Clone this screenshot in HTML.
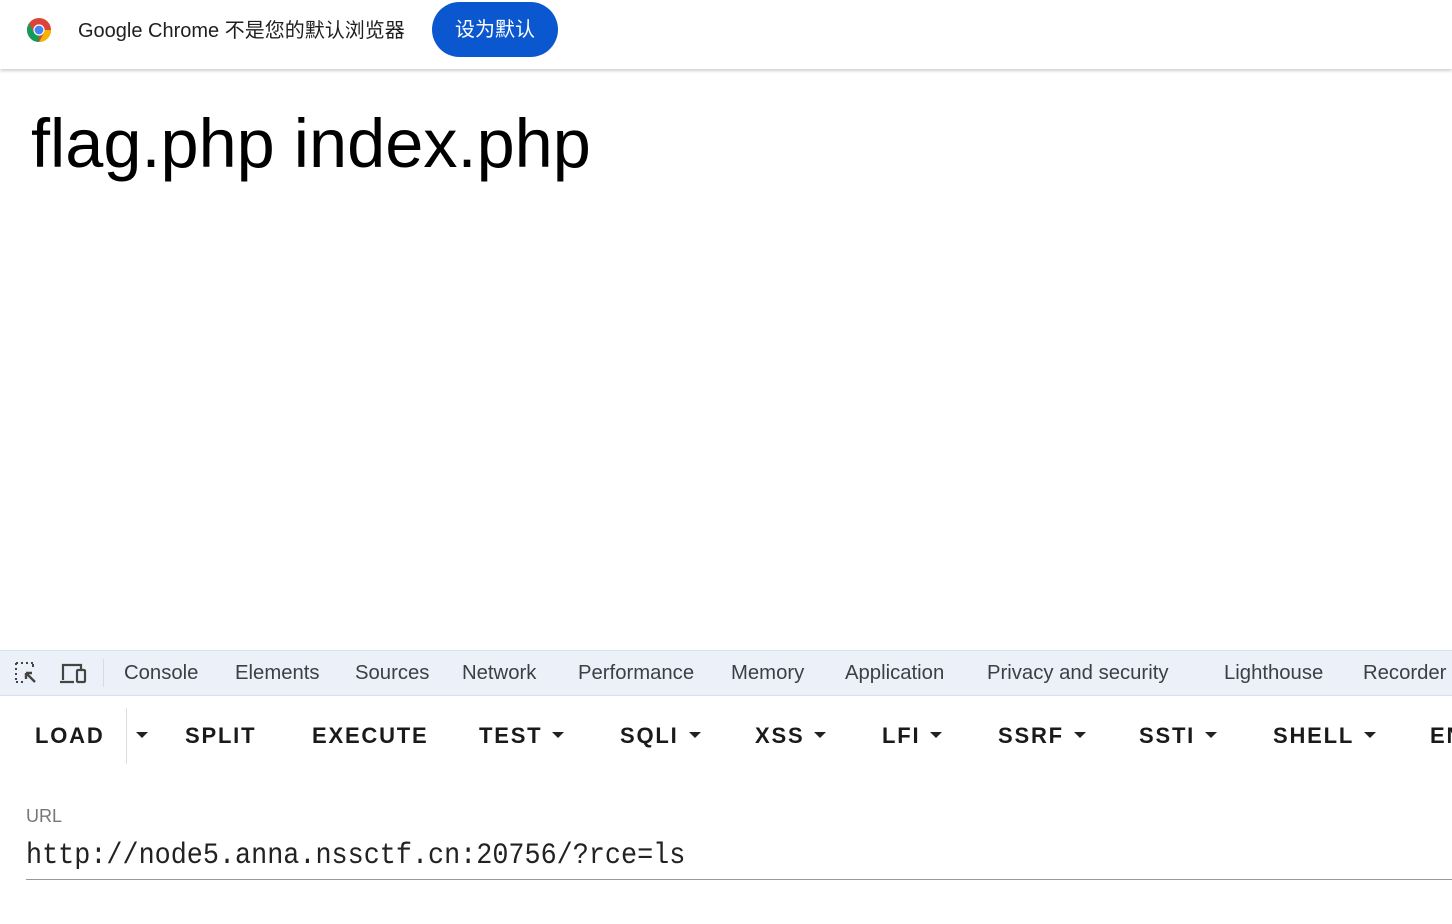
<!DOCTYPE html>
<html><head><meta charset="utf-8"><style>
*{margin:0;padding:0;box-sizing:border-box}
body{width:1452px;height:924px;overflow:hidden;background:#fff;font-family:"Liberation Sans","Noto Sans CJK SC",sans-serif;position:relative}
.a{position:absolute;white-space:nowrap}
.bar{position:absolute;left:0;top:0;width:1452px;height:69px;background:#fff;box-shadow:0 2px 3px rgba(0,0,0,.18)}
.tabs{position:absolute;left:0;top:650px;width:1452px;height:46px;background:#ecf1f9;border-top:1px solid #d3e0f5;border-bottom:1px solid #d3e0f5}
.t{position:absolute;top:11px;font-size:20.3px;color:#3c3f44}
.b{position:absolute;top:723px;font-size:22px;font-weight:bold;letter-spacing:1.8px;color:#1a1a1a}
.c{display:inline-block;width:0;height:0;border-left:6px solid transparent;border-right:6px solid transparent;border-top:6px solid #222;vertical-align:middle;margin-left:10px;position:relative;top:-2px}
</style></head><body>
<div class="bar">
<svg class="a" style="left:26px;top:17px" width="26" height="26" viewBox="0 0 26 26">
<circle cx="13" cy="13" r="12" fill="#db4437"/>
<path d="M13 13 L2.6 19 A12 12 0 0 0 13 25 Z" fill="#0f9d58"/>
<path d="M13 13 L2.6 19 A12 12 0 0 1 1 13 A12 12 0 0 1 3 6.5 L8 15.5Z" fill="#0f9d58"/>
<path d="M13 13 L25 13 A12 12 0 0 1 13 25 L18.5 15Z" fill="#f4b400"/>
<circle cx="13" cy="13" r="5.6" fill="#fff"/><circle cx="13" cy="13" r="4.4" fill="#4285f4"/></svg>
<div class="a" style="left:78px;top:14px;font-size:20px;color:#1f1f1f">Google Chrome 不是您的默认浏览器</div>
<div class="a" style="left:432px;top:2px;width:126px;height:55px;border-radius:28px;background:#0b57d0;color:#fff;font-size:20px;text-align:center;line-height:57px">设为默认</div>
</div>
<div class="a" style="left:31px;top:104px;font-size:68.5px;color:#000">flag.php index.php</div>
<div class="tabs">
<svg class="a" style="left:14px;top:10px" width="26" height="26" viewBox="0 0 26 26" fill="none" stroke="#444" stroke-width="2"><path d="M2 2h2M7 2h2M12 2h2M17 2h2M2 2v2M2 7v2M2 12v2M2 17v2M2 21h2M7 21h2M19 3v3"/><path d="M12 12l9 9M12 12h6M12 12v6" stroke-width="2.4"/></svg>
<svg class="a" style="left:59px;top:11px" width="30" height="24" viewBox="0 0 30 24" fill="none" stroke="#444" stroke-width="2.2"><path d="M4 18V3h18v4M1 20h14"/><rect x="18" y="8" width="8" height="12" rx="1"/></svg>
<div class="a" style="left:103px;top:8px;width:1px;height:28px;background:#cfdcf2"></div>
<div class="t" style="left:124px">Console</div>
<div class="t" style="left:235px">Elements</div>
<div class="t" style="left:355px">Sources</div>
<div class="t" style="left:462px">Network</div>
<div class="t" style="left:578px">Performance</div>
<div class="t" style="left:731px">Memory</div>
<div class="t" style="left:845px">Application</div>
<div class="t" style="left:987px">Privacy and security</div>
<div class="t" style="left:1224px">Lighthouse</div>
<div class="t" style="left:1363px">Recorder</div>
</div>
<div class="a" style="left:126px;top:708px;width:1px;height:56px;background:#ddd"></div>
<div class="b" style="left:35px">LOAD</div>
<div class="b" style="left:126px"><span class="c"></span></div>
<div class="b" style="left:185px">SPLIT</div>
<div class="b" style="left:312px">EXECUTE</div>
<div class="b" style="left:479px">TEST<span class="c"></span></div>
<div class="b" style="left:620px">SQLI<span class="c"></span></div>
<div class="b" style="left:755px">XSS<span class="c"></span></div>
<div class="b" style="left:882px">LFI<span class="c"></span></div>
<div class="b" style="left:998px">SSRF<span class="c"></span></div>
<div class="b" style="left:1139px">SSTI<span class="c"></span></div>
<div class="b" style="left:1273px">SHELL<span class="c"></span></div>
<div class="b" style="left:1430px">EN</div>
<div class="a" style="left:26px;top:806px;font-size:18px;color:#777">URL</div>
<div class="a" style="left:26px;top:840px;font-family:'Liberation Mono',monospace;font-size:26.8px;color:#222;transform:scaleY(1.1);transform-origin:left top">http://node5.anna.nssctf.cn:20756/?rce=ls</div>
<div class="a" style="left:26px;top:879px;width:1426px;height:1px;background:#999"></div>
</body></html>
